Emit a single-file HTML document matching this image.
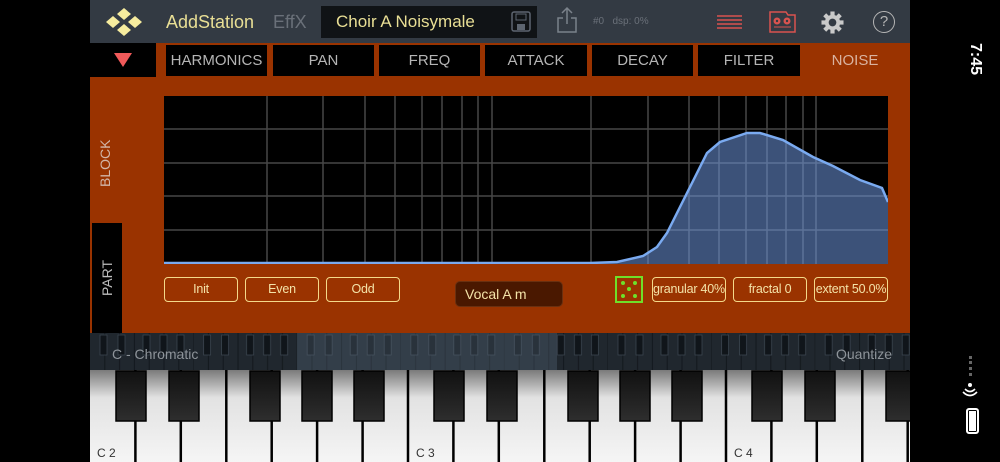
<!DOCTYPE html>
<html><head><meta charset="utf-8"><style>
*{margin:0;padding:0;box-sizing:border-box}
body{width:1000px;height:462px;background:#000;position:relative;overflow:hidden;font-family:"Liberation Sans",sans-serif}
.a{position:absolute}
.top{left:90px;top:0;width:820px;height:43px;background:#333a43}
.tab{position:absolute;top:45px;height:31px;background:#000;color:#b5b5b5;font-size:15px;line-height:31px;text-align:center}
.btn{position:absolute;top:277px;height:25px;border:1.5px solid #f4d98a;border-radius:4px;color:#f4e3a8;font-size:12.5px;line-height:22px;text-align:center;white-space:nowrap;overflow:hidden;letter-spacing:-0.2px}
</style></head><body>
<div class="a top"></div>
<svg class="a" style="left:100px;top:5px" width="50" height="34" viewBox="0 0 50 34">
<g fill="#f6ec9e"><polygon points="24,3 31,9 24,15 17,9"/><polygon points="13,11 20,17 13,23 6,17"/><polygon points="35,11 42,17 35,23 28,17"/><polygon points="24,19 31,25 24,31 17,25"/></g></svg>
<div class="a" style="left:166px;top:12px;font-size:18px;color:#e9df95">AddStation</div>
<div class="a" style="left:273px;top:12px;font-size:18px;color:#6a7079">EffX</div>
<div class="a" style="left:321px;top:6px;width:216px;height:32px;background:#101316"></div>
<div class="a" style="left:336px;top:12px;font-size:17px;color:#e9df95">Choir A Noisymale</div>
<svg class="a" style="left:511px;top:11px" width="20" height="22"><rect x="1" y="1" width="18" height="19" rx="2" fill="none" stroke="#5d6570" stroke-width="1.5"/><rect x="5" y="3" width="10" height="6" fill="none" stroke="#5d6570"/><rect x="6" y="13" width="8" height="6" fill="#5d6570"/></svg>
<svg class="a" style="left:556px;top:6px" width="22" height="28"><path d="M11 2V18M6 7L11 2L16 7M7 12H2V26H20V12H15" fill="none" stroke="#7b828b" stroke-width="1.5"/></svg>
<div class="a" style="left:593px;top:16px;font-size:10px;color:#6a7079">#0&nbsp;&nbsp;&nbsp;dsp: 0%</div>
<svg class="a" style="left:717px;top:14px" width="27" height="16"><g stroke="#d9534f" stroke-width="1.5"><line x1="0" y1="2" x2="25" y2="2"/><line x1="0" y1="6" x2="25" y2="6"/><line x1="0" y1="10" x2="25" y2="10"/><line x1="0" y1="14" x2="25" y2="14"/></g></svg>
<svg class="a" style="left:769px;top:11px" width="28" height="22"><path d="M1 1H17L19 4H26V21H1Z" fill="none" stroke="#d9534f" stroke-width="1.5"/><circle cx="8" cy="10" r="3.5" fill="#d9534f"/><circle cx="18" cy="10" r="3.5" fill="#d9534f"/><circle cx="8" cy="10" r="1.2" fill="#333a43"/><circle cx="18" cy="10" r="1.2" fill="#333a43"/><line x1="5" y1="16" x2="22" y2="16" stroke="#d9534f"/></svg>
<svg class="a" style="left:821px;top:11px" width="23" height="23" viewBox="-12 -12 24 24"><g fill="#c9c9c9"><circle r="8"/><g id="t"><rect x="-2.2" y="-11.5" width="4.4" height="5"/></g><use href="#t" transform="rotate(45)"/><use href="#t" transform="rotate(90)"/><use href="#t" transform="rotate(135)"/><use href="#t" transform="rotate(180)"/><use href="#t" transform="rotate(225)"/><use href="#t" transform="rotate(270)"/><use href="#t" transform="rotate(315)"/></g><circle r="4" fill="#333a43"/></svg>
<div class="a" style="left:873px;top:11px;width:22px;height:22px;border:1.5px solid #b5b5b5;border-radius:50%;color:#b5b5b5;font-size:15px;line-height:19px;text-align:center">?</div>

<div class="a" style="left:90px;top:43px;width:820px;height:290px;background:#9a3300"></div>
<div class="a" style="left:90px;top:43px;width:66px;height:34px;background:#000"></div>
<svg class="a" style="left:113px;top:52px" width="20" height="16"><polygon points="1,1 19,1 10,15" fill="#f05a5a"/></svg>
<div class="tab" style="left:166px;width:101px">HARMONICS</div>
<div class="tab" style="left:273px;width:101px">PAN</div>
<div class="tab" style="left:379px;width:101px">FREQ</div>
<div class="tab" style="left:485px;width:102px">ATTACK</div>
<div class="tab" style="left:592px;width:101px">DECAY</div>
<div class="tab" style="left:698px;width:102px">FILTER</div>
<div class="tab" style="left:800px;width:110px;background:#9a3300;color:#d9b3a0">NOISE</div>
<div class="a" style="left:83px;top:157px;width:44px;transform:rotate(-90deg);color:#d2b6a8;font-size:14px;text-align:center">BLOCK</div>
<div class="a" style="left:92px;top:223px;width:30px;height:110px;background:#000"></div>
<div class="a" style="left:87px;top:270px;width:40px;transform:rotate(-90deg);color:#bdbdbd;font-size:14px;text-align:center">PART</div>

<svg class="a" style="left:164px;top:96px" width="724" height="168">
<rect width="724" height="168" fill="#000"/>
<g stroke="#474747" stroke-width="1.5">
<line x1="0" y1="33" x2="724" y2="33"/><line x1="0" y1="67" x2="724" y2="67"/><line x1="0" y1="100" x2="724" y2="100"/><line x1="0" y1="134" x2="724" y2="134"/>
<line x1="103" y1="0" x2="103" y2="168"/><line x1="159" y1="0" x2="159" y2="168"/><line x1="201" y1="0" x2="201" y2="168"/><line x1="231" y1="0" x2="231" y2="168"/><line x1="258" y1="0" x2="258" y2="168"/><line x1="278" y1="0" x2="278" y2="168"/><line x1="298" y1="0" x2="298" y2="168"/><line x1="314" y1="0" x2="314" y2="168"/><line x1="328" y1="0" x2="328" y2="168"/>
<line x1="427" y1="0" x2="427" y2="168"/><line x1="484" y1="0" x2="484" y2="168"/><line x1="525" y1="0" x2="525" y2="168"/><line x1="555" y1="0" x2="555" y2="168"/><line x1="582" y1="0" x2="582" y2="168"/><line x1="603" y1="0" x2="603" y2="168"/><line x1="622" y1="0" x2="622" y2="168"/><line x1="639" y1="0" x2="639" y2="168"/><line x1="652" y1="0" x2="652" y2="168"/>
</g>
<path d="M0 167L426 167L453 166L479 160L493 151L503 137L526 91L543 57L556 46L583 37L596 37L619 44L649 61L669 70L696 84L718 92L724 106L724 168L0 168Z" fill="rgba(110,150,220,0.55)"/>
<path d="M0 167L426 167L453 166L479 160L493 151L503 137L526 91L543 57L556 46L583 37L596 37L619 44L649 61L669 70L696 84L718 92L724 106" fill="none" stroke="#7aaaf0" stroke-width="2.5"/>
</svg>
<div class="btn" style="left:164px;width:74px">Init</div>
<div class="btn" style="left:245px;width:74px">Even</div>
<div class="btn" style="left:326px;width:74px">Odd</div>
<div class="a" style="left:455px;top:281px;width:108px;height:26px;background:#4a1800;border:1px solid #6a3010;border-radius:5px;color:#f4e3a8;font-size:14px;line-height:24px;padding-left:9px">Vocal A m</div>
<svg class="a" style="left:615px;top:276px" width="28" height="27"><rect x="1" y="1" width="26" height="25" fill="none" stroke="#6ee02a" stroke-width="2"/><g fill="#6ee02a"><circle cx="8" cy="7" r="2"/><circle cx="20" cy="7" r="2"/><circle cx="14" cy="13" r="2"/><circle cx="8" cy="20" r="2"/><circle cx="20" cy="20" r="2"/></g></svg>
<div class="btn" style="left:652px;width:74px">granular 40%</div>
<div class="btn" style="left:733px;width:74px">fractal 0</div>
<div class="btn" style="left:814px;width:74px">extent 50.0%</div>

<svg class="a" style="left:90px;top:333px" width="820" height="129">
<defs>
<linearGradient id="wg" x1="0" y1="0" x2="0" y2="1"><stop offset="0" stop-color="#7a7a7a"/><stop offset="0.3" stop-color="#e2e2e2"/><stop offset="1" stop-color="#f5f5f5"/></linearGradient>
<linearGradient id="bg" x1="0" y1="0" x2="0" y2="1"><stop offset="0" stop-color="#111"/><stop offset="1" stop-color="#2e2e2e"/></linearGradient>
<pattern id="mini" width="103.6" height="37" patternUnits="userSpaceOnUse" x="0">
<rect width="103.6" height="37" fill="#20272e"/>
<g stroke="#12171c" stroke-width="1"><line x1="14.8" y1="0" x2="14.8" y2="37"/><line x1="29.6" y1="0" x2="29.6" y2="37"/><line x1="44.4" y1="0" x2="44.4" y2="37"/><line x1="59.2" y1="0" x2="59.2" y2="37"/><line x1="74" y1="0" x2="74" y2="37"/><line x1="88.8" y1="0" x2="88.8" y2="37"/><line x1="103.6" y1="0" x2="103.6" y2="37"/></g>
<g fill="#10151a" stroke="#3a444e" stroke-width="0.8"><rect x="10" y="2" width="7" height="20"/><rect x="28" y="2" width="7" height="20"/><rect x="53" y="2" width="7" height="20"/><rect x="70" y="2" width="7" height="20"/><rect x="87" y="2" width="7" height="20"/></g>
</pattern>
</defs>
<rect y="0" width="820" height="37" fill="url(#mini)"/>
<rect x="207" y="0" width="260" height="37" fill="#5a6a7a" opacity="0.35"/>
<rect y="37" width="820" height="92" fill="url(#wg)"/>
<g stroke="#000" stroke-width="2.5">
<line x1="45.4" y1="37" x2="45.4" y2="129"/><line x1="90.8" y1="37" x2="90.8" y2="129"/><line x1="136.3" y1="37" x2="136.3" y2="129"/><line x1="181.7" y1="37" x2="181.7" y2="129"/><line x1="227.1" y1="37" x2="227.1" y2="129"/><line x1="272.6" y1="37" x2="272.6" y2="129"/><line x1="318" y1="37" x2="318" y2="129"/><line x1="363.4" y1="37" x2="363.4" y2="129"/><line x1="408.8" y1="37" x2="408.8" y2="129"/><line x1="454.3" y1="37" x2="454.3" y2="129"/><line x1="499.7" y1="37" x2="499.7" y2="129"/><line x1="545.1" y1="37" x2="545.1" y2="129"/><line x1="590.6" y1="37" x2="590.6" y2="129"/><line x1="636" y1="37" x2="636" y2="129"/><line x1="681.4" y1="37" x2="681.4" y2="129"/><line x1="726.8" y1="37" x2="726.8" y2="129"/><line x1="772.3" y1="37" x2="772.3" y2="129"/><line x1="817.7" y1="37" x2="817.7" y2="129"/>
</g>
<g fill="url(#bg)" stroke="#000" stroke-width="1.5">
<rect x="26" y="38" width="30" height="50"/><rect x="79" y="38" width="30" height="50"/><rect x="160" y="38" width="30" height="50"/><rect x="212" y="38" width="30" height="50"/><rect x="264" y="38" width="30" height="50"/>
<rect x="344" y="38" width="30" height="50"/><rect x="397" y="38" width="30" height="50"/><rect x="478" y="38" width="30" height="50"/><rect x="530" y="38" width="30" height="50"/><rect x="582" y="38" width="30" height="50"/>
<rect x="662" y="38" width="30" height="50"/><rect x="715" y="38" width="30" height="50"/><rect x="796" y="38" width="30" height="50"/>
</g>
<g fill="#333" font-size="12" font-family="Liberation Sans,sans-serif"><text x="7" y="124">C 2</text><text x="326" y="124">C 3</text><text x="644" y="124">C 4</text></g>
<g fill="#8e949a" font-size="14" font-family="Liberation Sans,sans-serif"><text x="22" y="26">C - Chromatic</text><text x="746" y="26">Quantize</text></g>
</svg>

<div class="a" style="left:955px;top:50px;width:40px;transform:rotate(90deg);color:#fff;font-size:16px;font-weight:bold;text-align:center">7:45</div>
<div class="a" style="left:969px;top:356px;width:3px;height:20px;border-left:3px dotted #666"></div>
<svg class="a" style="left:962px;top:382px" width="16" height="16"><circle cx="8" cy="3" r="2" fill="#fff"/><path d="M3 7Q8 12 13 7M1 10Q8 17 15 10" fill="none" stroke="#fff" stroke-width="1.6"/></svg>
<div class="a" style="left:966px;top:408px;width:13px;height:26px;border:2px solid #fff;border-radius:3px;background:#fff;box-shadow:0 0 0 1px #000 inset"></div>
</body></html>
